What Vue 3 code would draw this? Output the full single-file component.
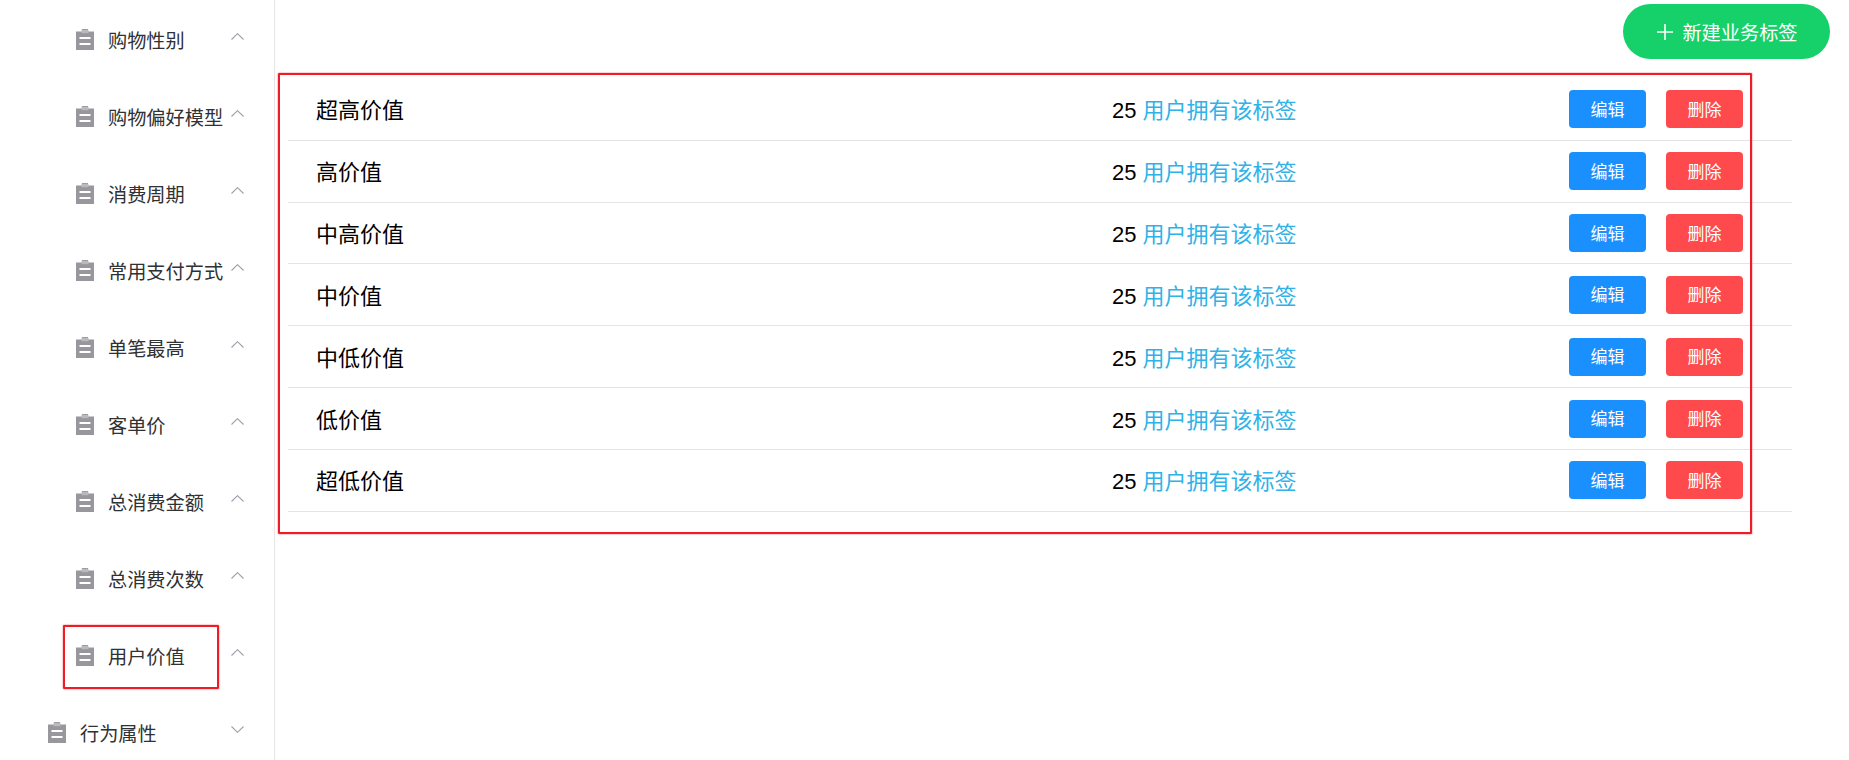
<script setup>
const menus = [
  { name: "购物性别", level: 2, open: true },
  { name: "购物偏好模型", level: 2, open: true },
  { name: "消费周期", level: 2, open: true },
  { name: "常用支付方式", level: 2, open: true },
  { name: "单笔最高", level: 2, open: true },
  { name: "客单价", level: 2, open: true },
  { name: "总消费金额", level: 2, open: true },
  { name: "总消费次数", level: 2, open: true },
  { name: "用户价值", level: 2, open: true, marked: true },
  { name: "行为属性", level: 1, open: false },
];

const tags = ["超高价值", "高价值", "中高价值", "中价值", "中低价值", "低价值", "超低价值"];
</script>

<template>
  <div class="page">
    <aside class="sidebar">
      <div
        v-for="m in menus"
        :key="m.name"
        class="menu-item"
        :class="{ sub: m.level === 2 }"
      >
        <svg class="menu-icon" viewBox="0 0 18 21" width="18" height="21">
          <path d="M6 0h6v2.5h6V21H0V2.5h6z" fill="#97979d" />
          <rect x="5.5" y="0.8" width="7" height="3.4" fill="#b9b9be" />
          <rect x="3.5" y="8" width="11" height="2" fill="#fff" />
          <rect x="3.5" y="14" width="11" height="2" fill="#fff" />
        </svg>
        <span class="menu-name">{{ m.name }}</span>
        <svg class="menu-arrow" viewBox="0 0 13 7" width="13" height="7">
          <path
            :d="m.open ? 'M0.5 6.5L6.5 0.7L12.5 6.5' : 'M0.5 0.5L6.5 6.3L12.5 0.5'"
            fill="none"
            stroke="#99a0ab"
            stroke-width="1.1"
          />
        </svg>
        <div v-if="m.marked" class="mark mark-menu"></div>
      </div>
    </aside>

    <main class="content">
      <div class="toolbar">
        <button class="btn-new">
          <svg viewBox="0 0 16 16" width="16" height="16">
            <path d="M8 0v16M0 8h16" stroke="#fff" stroke-width="1.6" fill="none" />
          </svg>
          <span>新建业务标签</span>
        </button>
      </div>

      <div class="tag-list">
        <div v-for="t in tags" :key="t" class="tag-row">
          <div class="tag-name">{{ t }}</div>
          <div class="tag-count">25 <span>用户拥有该标签</span></div>
          <div class="tag-actions">
            <button class="btn btn-edit">编辑</button>
            <button class="btn btn-del">删除</button>
          </div>
        </div>
        <div class="mark mark-list"></div>
      </div>
    </main>
  </div>
</template>

<style>
html,
body {
  background: #fff;
  overflow: hidden;
}
</style>

<style scoped>
.page {
  display: flex;
  height: 760px;
  overflow: hidden;
  font-family: "Liberation Sans", "Noto Sans CJK SC", sans-serif;
}

.sidebar {
  width: 275px;
  flex-shrink: 0;
  box-sizing: border-box;
  padding-top: 1px;
  border-right: 1px solid #e6e6e6;
}

.menu-item {
  position: relative;
  display: flex;
  align-items: center;
  height: 77px;
  padding-left: 48px;
  color: #303133;
  font-size: 19.2px;
}

.menu-item.sub {
  padding-left: 76px;
}

.menu-icon {
  flex-shrink: 0;
  margin-right: 14px;
}

.menu-name {
  white-space: nowrap;
}

.menu-arrow {
  position: absolute;
  left: 231px;
  top: 32px;
}

.content {
  flex: 1;
  min-width: 0;
  padding: 4px 19px 0 13px;
}

.toolbar {
  display: flex;
  justify-content: flex-end;
}

.btn-new {
  display: flex;
  align-items: center;
  justify-content: center;
  gap: 9px;
  width: 207px;
  height: 55px;
  padding: 0 0 0 2px;
  border: none;
  border-radius: 28px;
  background: #16d16a;
  color: #fff;
  font-family: inherit;
  font-size: 19.2px;
}

.tag-list {
  position: relative;
  margin-top: 20px;
  margin-right: 38px;
}

.tag-row {
  display: flex;
  align-items: center;
  box-sizing: border-box;
  height: 61.83px;
  padding: 0 49px 0 28px;
  border-bottom: 1px solid #e4e4e4;
  font-size: 22px;
  color: #000;
}

.tag-name {
  width: 796px;
  margin-top: -2px;
}

.tag-count {
  flex: 1;
  margin-top: -2px;
}

.tag-count span {
  color: #2fb2e8;
}

.tag-actions {
  display: flex;
  gap: 20px;
}

.btn {
  width: 77px;
  height: 38px;
  padding: 0 0 2px;
  border: none;
  border-radius: 4px;
  color: #fff;
  font-family: inherit;
  font-size: 17px;
}

.btn-edit {
  background: #1a90ff;
}

.btn-del {
  background: #ff4a4d;
}

.mark {
  position: absolute;
  box-sizing: border-box;
  border: 2px solid #ee1c25;
  border-radius: 1px;
  box-shadow: 0 0 1.5px #ee1c25;
  pointer-events: none;
}

.mark-menu {
  left: 63px;
  top: 8px;
  width: 156px;
  height: 64px;
}

.mark-list {
  left: -10px;
  top: -6px;
  width: 1474px;
  height: 461px;
}
</style>
